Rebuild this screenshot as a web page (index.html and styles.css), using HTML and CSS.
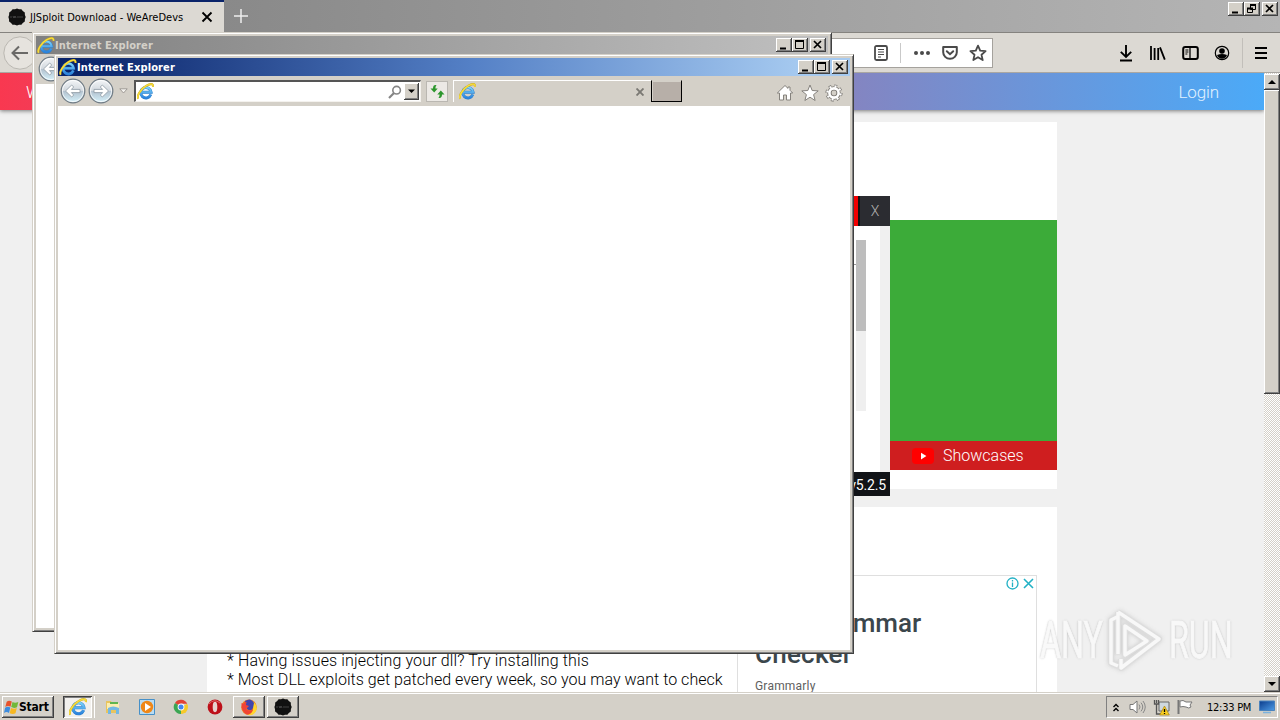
FILE: index.html
```html
<!DOCTYPE html>
<html lang="en">
<head>
<meta charset="utf-8">
<title>JJSploit Download - WeAreDevs</title>
<link rel="stylesheet" href="styles.css">
</head>
<body>
<svg class="defs" width="0" height="0">
  <defs>
    <linearGradient id="ieblue" x1="0" y1="0" x2="0" y2="1"><stop offset="0" stop-color="#7bd2fa"/><stop offset="1" stop-color="#2b83dc"/></linearGradient>
    <linearGradient id="ball" x1="0" y1="0" x2="0" y2="1"><stop offset="0" stop-color="#f4f6f8"/><stop offset=".48" stop-color="#d3d9df"/><stop offset=".52" stop-color="#b4c3d0"/><stop offset="1" stop-color="#d5f2fb"/></linearGradient>
    <linearGradient id="screen" x1="0" y1="0" x2="1" y2="1"><stop offset="0" stop-color="#0b3c8c"/><stop offset="1" stop-color="#4e9ce6"/></linearGradient>
    <symbol id="ie" viewBox="0 0 16 16">
      <path d="M13 10.900A4.900 4.900 0 1 1 13.300 8.700H4.500" fill="none" stroke="#2d7fcb" stroke-width="2.700"/>
      <path d="M13 10.900A4.900 4.900 0 1 1 13.300 8.700H4.500" fill="none" stroke="url(#ieblue)" stroke-width="2"/>
      <path d="M1.200 14.800C-.6 12.400 3.400 5.800 8.500 2.800 12.400.4 15.600.3 15 3.600" fill="none" stroke="#c9ab22" stroke-width="1.900"/>
      <path d="M1.200 14.800C-.6 12.400 3.400 5.800 8.500 2.800 12.400.4 15.600.3 15 3.600" fill="none" stroke="#f7dc3c" stroke-width="1.400"/>
    </symbol>
    <symbol id="back" viewBox="0 0 26 26">
      <circle cx="13" cy="13" r="11.800" fill="url(#ball)" stroke="#707b84" stroke-width="1.200"/>
      <circle cx="13" cy="13" r="10.600" fill="none" stroke="#fff" stroke-opacity=".75"/>
      <path d="M5.500 13l6.200-6 2 2-2.300 2.400H20v3.200h-8.600l2.300 2.400-2 2z" fill="#fff" stroke="#8c98a2" stroke-width=".8"/>
    </symbol>
    <symbol id="min" viewBox="0 0 16 14"><path d="M4 10.500h6" stroke="#000" stroke-width="2"/></symbol>
    <symbol id="max" viewBox="0 0 16 14"><path d="M3.500 3.500h8v7h-8z" fill="none" stroke="#000"/><path d="M3 3h9" stroke="#000" stroke-width="2"/></symbol>
    <symbol id="cls" viewBox="0 0 16 14"><path d="M4 3l7 7M11 3l-7 7" stroke="#000" stroke-width="1.700"/></symbol>
    <symbol id="disc" viewBox="0 0 18 18"><path d="M9 .5l2 .8 2.400 0 1.400 1.800 2 1.400.1 2.400.8 2.100-.8 2.200-.1 2.300-2 1.400-1.400 1.800-2.400.1L9 17.500l-2.200-.7-2.300-.1-1.400-1.800-2-1.400L1 11.200.4 9l.7-2.100.1-2.400 2-1.400 1.400-1.800H7z" fill="#111"/><path d="M3 8v2M5 8l1 2 1-2 1 2M10 8v2M12 8v2M14 8v2" stroke="#666" stroke-width=".6" fill="none"/></symbol>
  </defs>
</svg>

<div class="desktop">
  <section class="firefox">
    <div class="tabs">
      <div class="tab">
        <svg width="18" height="18"><use href="#disc"/></svg>
        <span class="tab-title">JJSploit Download - WeAreDevs</span>
        <svg class="tab-close" width="12" height="12" viewBox="0 0 12 12"><path d="M1.500 1.500l9 9M10.500 1.500l-9 9" stroke="#000" stroke-width="1.800"/></svg>
      </div>
      <svg class="newtab" width="14" height="14" viewBox="0 0 14 14"><path d="M7 0v14M0 7h14" stroke="#eee" stroke-width="1.500"/></svg>
      <div class="controls">
        <svg class="wbtn"><use href="#min"/></svg>
        <svg class="wbtn" viewBox="0 0 16 14"><path d="M6.500 2.500h5v5h-5zM3.500 6.500h5v4h-5z" fill="#d4d0c8" stroke="#000"/><path d="M6 3h6M3 6.500h6" stroke="#000" stroke-width="2"/></svg>
        <svg class="wbtn gap"><use href="#cls"/></svg>
      </div>
    </div>

    <div class="navbar">
      <svg class="ff-back" width="34" height="34" viewBox="0 0 34 34"><circle cx="17" cy="17" r="16.200" fill="#e6e3de" stroke="#bab7b1"/><path d="M25 17H10M16 10.500L9.500 17l6.500 6.500" fill="none" stroke="#6a6967" stroke-width="2"/></svg>
      <div class="urlbar">
        <svg width="16" height="16" viewBox="0 0 16 16" fill="none" stroke="#4a4a4a"><rect x="2" y="1" width="12" height="14" rx="1.500" stroke-width="1.800"/><path d="M5 4.500h6M5 7h6M5 9.500h6M5 12h3"/></svg>
        <i class="sep"></i>
        <svg width="18" height="16" viewBox="0 0 18 16" fill="#4a4a4a"><circle cx="3" cy="8" r="2"/><circle cx="9" cy="8" r="2"/><circle cx="15" cy="8" r="2"/></svg>
        <svg width="16" height="16" viewBox="0 0 16 16" fill="none" stroke="#4a4a4a" stroke-width="2"><path d="M1.200 2h13.600v5.200a6.800 6.600 0 0 1-13.600 0z" stroke-linejoin="round"/><path d="M4.800 6.200L8 9.200l3.200-3" stroke-linecap="round"/></svg>
        <svg width="18" height="18" viewBox="0 0 18 18" fill="none" stroke="#4a4a4a" stroke-width="1.800" stroke-linejoin="round"><path d="M9 1.600l2.200 5 5.400.5-4.100 3.600 1.200 5.400L9 13.200l-4.700 2.900 1.200-5.400-4.100-3.600 5.400-.5z"/></svg>
      </div>
      <div class="ff-tools">
        <svg width="16" height="18" viewBox="0 0 16 18" fill="none" stroke="#000" stroke-width="1.900"><path d="M8 1v11.500M2.800 7.800L8 13l5.200-5.200M2 16.500h12"/></svg>
        <svg width="17" height="16" viewBox="0 0 17 16" stroke="#000" stroke-width="1.800"><path d="M2 1v14M5.600 3v12M9.200 3v12M11 2.400l4.800 12.200"/></svg>
        <svg width="17" height="16" viewBox="0 0 17 16" fill="none" stroke="#000"><rect x="1.200" y="2" width="14.600" height="12" rx="2" stroke-width="2"/><path d="M8 2v12" stroke-width="1.300"/><path d="M3.400 5h3M3.400 7h3M3.400 9h2"/></svg>
        <svg width="16" height="16" viewBox="0 0 16 16"><circle cx="8" cy="8" r="6.700" fill="none" stroke="#000" stroke-width="1.200"/><circle cx="8" cy="6" r="2.800"/><path d="M3 10q5-2 10 0-1.500 3.800-5 3.800T3 10z"/></svg>
        <i class="sep dark"></i>
        <svg width="12" height="14" viewBox="0 0 12 14" stroke="#000" stroke-width="2"><path d="M0 2h12M0 7h12M0 12h12"/></svg>
      </div>
    </div>

    <div class="viewport">
      <main class="page">
        <header class="site-header"><span class="brand">WeAreDevs</span><span class="login">Login</span></header>
        <div class="column">
          <article class="card hero">
            <div class="app">
              <div class="app-bar"><i class="red"></i><span class="app-x">X</span></div>
              <div class="app-body"><i class="app-rule"></i><div class="app-scroll"><i></i></div></div>
              <div class="app-version"><span>v5.2.5</span></div>
            </div>
            <aside class="promo">
              <div class="green"></div>
              <div class="showcases">
                <svg width="22" height="16" viewBox="0 0 22 16"><rect width="22" height="16" rx="4" fill="#f00"/><path d="M9 4.800v6.600l5.400-3.300z" fill="#fff"/></svg>
                <span>Showcases</span>
              </div>
            </aside>
          </article>
          <article class="card notes">
            <div class="lines"><p class="l1">* Having issues injecting your dll? Try installing this</p><p class="l2">* Most DLL exploits get patched every week, so you may want to check</p></div>
            <div class="ad">
              <div class="ad-icons">
                <svg width="13" height="13" viewBox="0 0 13 13" fill="none" stroke="#22b1c5" stroke-width="1.300"><circle cx="6.500" cy="6.500" r="5.500"/><path d="M6.500 3v1.400M6.500 5.600V10"/></svg>
                <svg width="11" height="11" viewBox="0 0 11 11" stroke="#22b1c5" stroke-width="1.600"><path d="M1 1l9 9M10 1l-9 9"/></svg>
              </div>
              <h2><span class="h-a">Free Grammar</span><br><span class="h-b">Checker</span></h2>
              <p>Grammarly</p>
            </div>
          </article>
        </div>
      </main>
      <div class="scrollbar">
        <svg class="sbtn" viewBox="0 0 16 16"><path d="M4 10h8L8 6z"/></svg>
        <i class="thumb"></i>
        <svg class="sbtn last" viewBox="0 0 16 16"><path d="M4 6h8l-4 4z"/></svg>
      </div>
    </div>
  </section>

  <section class="ie-window rear">
    <div class="caption"><svg width="18" height="17"><use href="#ie"/></svg><b>Internet Explorer</b>
      <div class="controls"><svg class="wbtn"><use href="#min"/></svg><svg class="wbtn"><use href="#max"/></svg><svg class="wbtn gap"><use href="#cls"/></svg></div>
    </div>
    <div class="ie-bar"><svg class="orb" width="26" height="26"><use href="#back"/></svg></div>
    <div class="ie-content"></div>
  </section>

  <section class="ie-window front">
    <div class="caption"><svg width="18" height="17"><use href="#ie"/></svg><b>Internet Explorer</b>
      <div class="controls"><svg class="wbtn"><use href="#min"/></svg><svg class="wbtn"><use href="#max"/></svg><svg class="wbtn gap"><use href="#cls"/></svg></div>
    </div>
    <div class="ie-bar">
      <svg class="orb" width="26" height="26"><use href="#back"/></svg>
      <svg class="orb flip" width="26" height="26"><use href="#back"/></svg>
      <svg class="drop" width="9" height="6" viewBox="0 0 9 6"><path d="M.8.8h7.400L4.500 5z" fill="#f4f2ee" stroke="#8f8c87" stroke-width=".8"/></svg>
      <div class="address">
        <svg width="17" height="17"><use href="#ie"/></svg>
        <svg class="mag" width="14" height="14" viewBox="0 0 14 14" fill="none" stroke="#858585"><circle cx="8.600" cy="5.200" r="3.800" stroke-width="1.600"/><path d="M6 8L1 13" stroke-width="2.200"/></svg>
        <svg class="combo" viewBox="0 0 15 17"><path d="M4 6.500h7L7.500 10z"/></svg>
      </div>
      <div class="refresh"><svg width="17" height="17" viewBox="0 0 17 17" fill="#2c962c"><path d="M7.500 2.200Q4 1.500 4 5.500H1.500l3.700 4 3.500-4H6.400Q6.200 3.500 7.500 2.200z"/><path d="M9.500 14.800q3.500.7 3.500-3.300h2.500l-3.700-4-3.500 4h2.300q.2 2-1.100 3.300z"/></svg></div>
      <div class="ie-tab"><svg width="17" height="17"><use href="#ie"/></svg><svg class="tx" width="8" height="8" viewBox="0 0 8 8"><path d="M.5.5l7 7M7.500.5l-7 7" stroke="#7b7974" stroke-width="1.900"/></svg></div>
      <div class="ie-new"></div>
      <div class="ie-tools">
        <svg width="18" height="18" viewBox="0 0 18 18" fill="#fff" stroke="#85827d"><path d="M9 1.500L1.300 9h2.200v7h4v-5h3v5h4V9h2.200L14 6.300V3h-2v1.400z"/></svg>
        <svg width="18" height="18" viewBox="0 0 18 18" fill="#fff" stroke="#85827d"><path d="M9 1l2.200 5.500 6 .4-4.600 3.700 1.500 5.900L9 13.200l-5.100 3.300 1.500-5.900L.8 6.900l6-.4z"/></svg>
        <svg width="18" height="18" viewBox="0 0 18 18"><g fill="none" stroke="#7d7a75"><circle cx="9" cy="9" r="7" stroke-width="3.200" stroke-dasharray="2.800 2.700"/><circle cx="9" cy="9" r="4.600" stroke-width="4.400"/></g><g fill="none" stroke="#fff"><circle cx="9" cy="9" r="6.600" stroke-width="2.300" stroke-dasharray="1.900 3.280" stroke-dashoffset="-.4"/><circle cx="9" cy="9" r="4.600" stroke-width="2.600"/></g></svg>
      </div>
    </div>
    <div class="ie-content"></div>
  </section>

  <div class="watermark">
    <span class="any">ANY</span>
    <svg width="58" height="66" viewBox="0 0 58 66" fill="none" stroke-linejoin="round"><g stroke="#dcdcdc" stroke-width="6"><path d="M11 9L5 12v43l7 3M12 4l41 27L15 60v-9M12 4v42M19 18v29l22-14z"/></g><g stroke="#f9f9f9" stroke-width="3.500"><path d="M11 9L5 12v43l7 3M12 4l41 27L15 60v-9M12 4v42M19 18v29l22-14z"/></g></svg>
    <span class="run">RUN</span>
  </div>

  <footer class="taskbar">
    <div class="start">
      <svg width="15" height="15" viewBox="0 0 15 15"><path d="M2.700 1.700Q5-.1 7.800 1.600L6.500 6.800Q4 5.300 1.300 6.900z" fill="#e8532b"/><path d="M8.500 2Q11 3.600 14.300 2L13 7.200Q10 8.700 7.200 7.100z" fill="#72b839"/><path d="M1.100 7.700Q4 6 6.300 7.600L5 12.900Q2.400 11.300 0 12.900z" fill="#3d8cde"/><path d="M7 7.900q3 1.600 5.800.1l-1.300 5.300q-2.600 1.500-5.800-.1z" fill="#f7b822"/></svg>
      <b>Start</b>
    </div>
    <div class="task active"><svg width="18" height="18"><use href="#ie"/></svg></div>
    <i class="group-edge"></i>
    <div class="quick">
      <svg width="16" height="16" viewBox="0 0 16 16"><path d="M1 2h5l1 2h7v10H1z" fill="#e8c45e"/><path d="M2 4h12v6H2z" fill="#fbedb0"/><path d="M5 4h8" stroke="#60b54f" stroke-width="2"/><path d="M3 15V9q5-3 11 0v6h-3v-4H6v4z" fill="#72b8e4"/></svg>
      <svg width="16" height="16" viewBox="0 0 16 16"><path d="M.5.5h15v15H.5z" fill="#b9dcf3" stroke="#4690c8"/><circle cx="8" cy="8" r="6.200" fill="#ef8718"/><path d="M6 4l6 4-6 4z" fill="#fff"/></svg>
      <svg width="16" height="16" viewBox="0 0 16 16"><path d="M8 8L2 4a7 7 0 0 1 12.200.8H8z" fill="#e24135"/><path d="M8 8l6.200-3.200A7 7 0 0 1 8 15z" fill="#f6c928"/><path d="M8 8v7A7 7 0 0 1 2 4z" fill="#3ba653"/><circle cx="8" cy="8" r="3.400" fill="#fff"/><circle cx="8" cy="8" r="2.500" fill="#4385ef"/></svg>
      <svg width="16" height="16" viewBox="0 0 16 16"><circle cx="8" cy="8" r="7.400" fill="#bd1019"/><ellipse cx="8" cy="8" rx="2.300" ry="5.200" fill="#e7d2cf"/><path d="M2 5Q7-1 13 4" fill="none" stroke="#e2686a"/></svg>
    </div>
    <div class="task"><svg width="18" height="18" viewBox="0 0 18 18"><circle cx="9" cy="9.300" r="7.800" fill="#f17b20"/><path d="M11 2q7 4 5.600 10Q14 18 8 17q6-3 5-8z" fill="#ffd52f"/><path d="M5 3q6-4 9 2l-1 5q-2 4-6 1 0-2-2-3z" fill="#4146ad"/><path d="M1.500 5l2 .8Q5 3 6.500 4L6 7l3 1-3 3q4 3 7 0-1 5-6 5.500Q1 14 1.500 5z" fill="#ef4436"/></svg></div>
    <div class="task last-task"><svg width="18" height="18"><use href="#disc"/></svg></div>
    <div class="tray">
      <svg width="6" height="9" viewBox="0 0 6 9" fill="none" stroke="#000" stroke-width="1.400"><path d="M.5 4L3 1.500 5.500 4M.5 8L3 5.500 5.500 8"/></svg>
      <svg width="17" height="16" viewBox="0 0 17 16"><path d="M1 5.500h3L8 2v12l-4-3.500H1z" fill="#fff" stroke="#777"/><path d="M10 5.500q2 2.500 0 5M12 3.700q3.500 4.300 0 8.600M14 2q4.500 6 0 12" fill="none" stroke="#888"/></svg>
      <svg width="17" height="17" viewBox="0 0 17 17"><path d="M6 3h10v9H6z" fill="#cfd8df" stroke="#666"/><path d="M1.500 1v4h4V1M3.500 5v10h5M3.500 1v3" fill="none" stroke="#555" stroke-width="1.300"/><path d="M11.500 7l4.800 9H6.700z" fill="#f9ce20" stroke="#a7831a" stroke-width=".7"/><path d="M11.500 10v3M11.500 14v1" stroke="#000" stroke-width="1.300"/></svg>
      <svg width="17" height="16" viewBox="0 0 17 16"><path d="M1.500 1v14" stroke="#777" stroke-width="2"/><path d="M3 2q3-1.500 6 1h6l-2 3 1 2q-2 2-5 0-3-1-6 0z" fill="#fff" stroke="#777"/></svg>
      <span class="clock">12:33 PM</span>
      <svg width="16" height="14" viewBox="0 0 16 14"><path d="M.5 1h15v9.500H.5z" fill="url(#screen)" stroke="#4b83bd"/><path d="M4 12.500h8" stroke="#7bb2dd" stroke-width="1.500"/></svg>
    </div>
  </footer>
</div>
</body>
</html>
```

FILE: styles.css
```css
* { box-sizing: border-box; }
body { margin: 0; overflow: hidden; }
.defs { position: absolute; }
svg { display: block; flex: none; }
p, h2 { margin: 0; }

.desktop {
  position: relative;
  width: 1280px;
  height: 720px;
  display: flex;
  flex-direction: column;
  overflow: hidden;
  font-family: "DejaVu Sans Condensed", "DejaVu Sans", sans-serif;
  font-stretch: condensed;
  font-size: 11px;
  color: #000;
}

/* Browser chrome */
.firefox { height: 692px; display: flex; flex-direction: column; }
.tabs { height: 32px; flex: none; display: flex; background: linear-gradient(90deg, #808080, #b5b5b5); }
.tab { width: 224px; display: flex; align-items: center; padding: 0 11px 0 8px; border-top: 2px solid #0a246a; background: #dcd9d3; }
.tab-title { margin-left: 4px; white-space: nowrap; letter-spacing: .02px; }
.tab-close { margin-left: auto; }
.newtab { margin: 9px 0 0 10px; }
.controls { display: flex; margin-left: auto; }
.wbtn {
  width: 16px; height: 14px;
  background: #d4d0c8;
  box-shadow: inset -1px -1px #404040, inset 1px 1px #fff, inset -2px -2px #808080;
}
.wbtn.gap { margin-left: 2px; }
.tabs .controls { padding: 2px 2px 0 0; }
.navbar { height: 41px; flex: none; display: flex; align-items: center; padding-left: 3px; background: #dcd9d3; border-top: 1px solid #85837f; border-bottom: 1px solid #aaa7a2; }
.urlbar { width: 906px; height: 30px; margin-left: 50px; padding-right: 5px; display: flex; align-items: center; justify-content: flex-end; gap: 11px; background: #fff; border: 1px solid #a5a29d; }
.sep { width: 1px; height: 20px; background: #c9c9c9; margin-right: 1px; }
.sep.dark { height: 30px; background: #c2bfba; margin: 0 -3px 0 -4px; }
.ff-tools { margin-left: auto; padding-right: 13px; display: flex; align-items: center; gap: 15.5px; }

/* Web page */
.viewport { height: 619px; display: flex; font-family: Roboto, sans-serif; font-stretch: normal; }
.page { width: 1264px; background: #f0f0f0; overflow: hidden; }
.site-header { height: 37px; padding: 0 45px 0 26px; display: flex; align-items: center; justify-content: space-between; color: #fff; background: linear-gradient(90deg, #f93850, #4baaf8); box-shadow: 0 1px 4px rgba(0,0,0,.5); font-size: 17px; font-weight: 300; }
.login { color: #e2f2ff; font-weight: 300; letter-spacing: -.1px; }
.column { width: 850px; margin: 12px 0 0 207px; display: flex; flex-direction: column; gap: 18px; }
.card { background: #fff; }
.hero { height: 367px; display: flex; align-items: flex-start; }
.app { width: 683px; height: 300px; margin-top: 74px; display: flex; flex-direction: column; }
.app-bar { height: 30px; display: flex; background: #2b2c31; }
.red { width: 653px; flex: none; background: linear-gradient(90deg, #f20000 651px, #111 651px); }
.app-x { width: 30px; text-align: center; line-height: 30px; font-weight: 300; font-size: 14px; color: #b2b2b2; }
.app-body { height: 246px; padding: 14px 14px 0 0; display: flex; justify-content: flex-end; background: #fff; border-right: 10px solid #f0f0f0; }
.app-rule { width: 10px; height: 1px; margin: 24px 0 0; background: #999; }
.app-scroll { width: 10px; height: 171px; background: #efefef; }
.app-scroll i { display: block; height: 91px; background: #bdbdbd; }
.app-version { height: 24px; padding-right: 4px; text-align: right; line-height: 26px; color: #fff; font-size: 14px; letter-spacing: -.15px; background: #111317; }
.promo { width: 167px; margin-top: 98px; }
.green { height: 221px; background: #3cab39; }
.showcases { height: 29px; display: flex; align-items: center; gap: 9px; padding-left: 22px; color: #fff; font-size: 16px; font-weight: 300; letter-spacing: 0; background: #cf1e1f; }
.notes { height: 190px; display: flex; }
.lines { width: 530px; padding: 144px 0 0 20px; font-size: 16px; line-height: 19px; font-weight: 300; white-space: nowrap; }
.l1 { letter-spacing: .13px; }
.l2 { letter-spacing: .03px; }
.ad { width: 300px; margin-top: 68px; height: 130px; padding: 1px 2px 0 17px; border: 1px solid #dfdfdf; color: #3b464c; }
.ad-icons { display: flex; justify-content: flex-end; align-items: center; gap: 4px; height: 13px; }
.ad h2 { margin-top: 18px; font-size: 26px; line-height: 31px; font-weight: 500; white-space: nowrap; }
.h-b { letter-spacing: .25px; }
.ad p { margin-top: 7px; font-size: 12px; line-height: 18px; letter-spacing: .2px; color: #606060; }
.scrollbar { width: 16px; display: flex; flex-direction: column; padding-top: 1px; background: repeating-conic-gradient(#fff 0 25%, #d4d0c8 0 50%) 0 0 / 2px 2px; }
.sbtn, .thumb { width: 16px; height: 16px; flex: none; background: #d4d0c8; box-shadow: inset -1px -1px #404040, inset 1px 1px #fff, inset -2px -2px #808080; }
.thumb { height: 304px; }
.last { margin-top: auto; }

/* Internet Explorer windows, free-floating on the desktop */
.ie-window { position: absolute; width: 800px; height: 600px; padding: 3px; display: flex; flex-direction: column; background: #d4d0c8; border: 1px solid #d4d0c8; border-right-color: #404040; border-bottom-color: #404040; box-shadow: inset 1px 1px #fff, inset -1px -1px #808080; }
.rear { left: 32px; top: 32px; }
.front { left: 54px; top: 54px; }
.caption { height: 18px; flex: none; display: flex; align-items: center; padding: 0 2px 0 1px; color: #fff; background: linear-gradient(90deg, #0a246a 3%, #5480c6 52%, #a6caf0 94%); }
.rear .caption { color: #d4d0c8; background: linear-gradient(90deg, #808080, #c0c0c0); }
.caption b { letter-spacing: .12px; }
.ie-bar { height: 30px; flex: none; display: flex; align-items: center; padding-left: 2px; }
.orb { margin-right: 2px; }
.flip { transform: scaleX(-1); }
.drop { margin-left: 3px; }
.address { width: 287px; height: 22px; margin-left: 6px; padding: 1px; display: flex; align-items: center; background: #fff; border: 1px solid #f4f2ee; border-top: 2px solid #555; border-left: 2px solid #555; }
.mag { margin-left: auto; }
.combo { width: 15px; height: 17px; margin-left: 2px; background: #d4d0c8; box-shadow: inset -1px -1px #404040, inset 1px 1px #fff, inset -2px -2px #808080; }
.refresh { width: 22px; height: 21px; margin-left: 5px; display: grid; place-items: center; background: #ece9e5; border: 1px solid #bab7b1; }
.ie-tab { width: 198px; height: 22px; margin-left: 5px; display: flex; align-items: center; padding: 0 7px 0 5px; border-top: 1px solid #fff; border-left: 1px solid #fff; }
.tx { margin-left: auto; }
.ie-new { width: 31px; height: 22px; background: #b7afa8; border: 1px solid #000; border-top-color: #d4d0c8; box-shadow: inset 1px 1px #d4d0c8; }
.ie-tools { margin-left: auto; padding: 3px 7px 0 0; display: flex; gap: 6.5px; }
.ie-content { flex: 1; background: #fff; }

/* Recording mark laid over the page */
.watermark { position: absolute; left: 1040px; top: 608px; height: 66px; display: flex; align-items: center; font-family: Roboto, sans-serif; font-stretch: normal; color: #f9f9f9; font-size: 52px; line-height: 66px; text-shadow: 0 0 3px #b5b5b5, 0 0 2px #c5c5c5; opacity: .9; }
.watermark span { display: block; transform-origin: 0 50%; transform: scaleX(.62); -webkit-text-stroke: 1px #f9f9f9; }
.any { width: 66px; }
.watermark svg { filter: drop-shadow(0 0 2px #ccc); }
.run { width: 66px; margin-left: 5px; }

/* Taskbar */
.taskbar { position: relative; height: 28px; display: flex; align-items: center; padding: 2px 2px 0 2px; background: #d4d0c8; box-shadow: inset 0 1px #d4d0c8, inset 0 2px #fff; }
.start { width: 52px; height: 22px; display: flex; align-items: center; padding-left: 2px; box-shadow: inset -1px -1px #404040, inset 1px 1px #fff, inset -2px -2px #808080; }
.start b { letter-spacing: -.2px; font-size: 12px; }
.task { width: 32px; height: 22px; display: grid; place-items: center; box-shadow: inset -1px -1px #404040, inset 1px 1px #fff, inset -2px -2px #808080; }
.task.active { width: 29px; margin-left: 9px; background: #f2f0ed; box-shadow: inset 1px 1px #404040, inset -1px -1px #fff, inset 2px 2px #808080; }
.group-edge { width: 3px; height: 22px; border-right: 1px solid #fff; }
.quick { display: flex; gap: 18px; margin: 0 10px 0 10px; }
.last-task { margin-left: 2px; }
.tray { width: 172px; height: 22px; margin-left: auto; display: flex; align-items: center; padding: 0 2px 0 6px; border: 1px solid #808080; border-right-color: #fff; border-bottom-color: #fff; }
.tray svg:nth-child(2) { margin-left: 10px; }
.tray svg:nth-child(3) { margin-left: 7px; }
.tray svg:nth-child(4) { margin-left: 7px; }
.clock { margin-left: 13px; white-space: nowrap; letter-spacing: -.25px; }
.tray svg:last-child { margin-left: auto; }
```
